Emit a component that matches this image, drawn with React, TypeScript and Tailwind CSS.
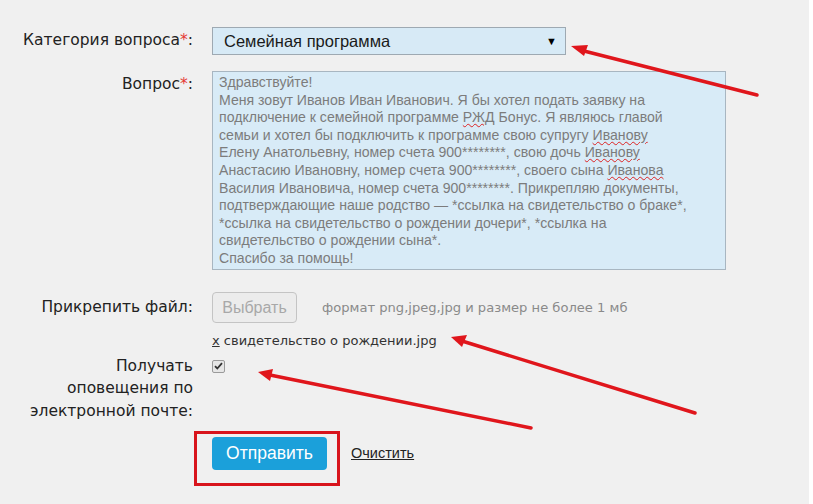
import React from "react";

const question = [
  [{ t: "Здравствуйте!" }],
  [{ t: "Меня зовут Иванов Иван Иванович. Я бы хотел подать заявку на" }],
  [{ t: "подключение к семейной программе " }, { t: "РЖД", w: true }, { t: " Бонус. Я являюсь главой" }],
  [{ t: "семьи и хотел бы подключить к программе свою супругу " }, { t: "Иванову", w: true }],
  [{ t: "Елену Анатольевну, номер счета 900********, свою дочь " }, { t: "Иванову", w: true }],
  [{ t: "Анастасию Ивановну, номер счета 900********, своего сына " }, { t: "Иванова", w: true }],
  [{ t: "Василия Ивановича, номер счета 900********. Прикрепляю документы," }],
  [{ t: "подтверждающие наше родство — *ссылка на свидетельство о браке*," }],
  [{ t: "*ссылка на свидетельство о рождении дочери*, *ссылка на" }],
  [{ t: "свидетельство о рождении сына*." }],
  [{ t: "Спасибо за помощь!" }],
];

const tahoma = { fontFamily: '"DejaVu Sans", Verdana, sans-serif' };

function Label({ children, className = "" }: any) {
  return (
    <div
      className={"w-[195px] shrink-0 text-right text-[15.5px] text-[#222] pr-[2px] " + className}
      style={tahoma}
    >
      {children}
    </div>
  );
}

function Star() {
  return <span className="text-[#e53935]">*</span>;
}

export default function App() {
  return (
    <div
      className="relative w-[813px] h-[504px] bg-[#f0f0f0] overflow-hidden"
      style={{ fontFamily: '"Liberation Sans", Arial, sans-serif' }}
    >
      <div className="absolute right-0 top-0 w-[4px] h-full bg-white" />

      <div className="flex flex-col pt-[27px]">
        {/* category */}
        <div className="flex items-center gap-[17px]">
          <Label>
            Категория вопроса<Star />:
          </Label>
          <div className="w-[354px] h-[28px] bg-[#d7eaf6] border border-[#9ea9b2] flex items-center justify-between pl-[11px] pr-[8px] text-[16.5px] text-[#1a1a1a]">
            <span>Семейная программа</span>
            <span className="text-[11px] text-black">▼</span>
          </div>
        </div>

        {/* question */}
        <div className="flex items-start gap-[17px] mt-[16px]">
          <Label className="pt-[2px]">
            Вопрос<Star />:
          </Label>
          <div className="w-[514px] h-[199px] bg-[#d8ebf7] border border-[#a8b6c1] pl-[6px] pt-[2px] text-[14.1px] leading-[17.6px] text-[#7c7c7c]">
            {question.map((line, i) => (
              <div key={i} className="whitespace-nowrap">
                {line.map((p: any, j) =>
                  p.w ? (
                    <span key={j} className="underline decoration-wavy decoration-[#d22] decoration-1 underline-offset-[1px]">
                      {p.t}
                    </span>
                  ) : (
                    <span key={j}>{p.t}</span>
                  )
                )}
              </div>
            ))}
          </div>
        </div>

        {/* file */}
        <div className="flex items-start gap-[17px] mt-[22px]">
          <Label className="pt-[4px]">Прикрепить файл:</Label>
          <div className="flex flex-col">
            <div className="flex items-center">
              <div className="w-[85px] h-[31px] rounded-[4px] border border-[#c4c4c4] bg-[#ececec] flex items-center justify-center text-[16px] text-[#a8a8a8]">
                Выбрать
              </div>
              <span className="ml-[25px] text-[13.1px] text-[#8a8a8a]" style={tahoma}>
                формат png,jpeg,jpg и размер не более 1 мб
              </span>
            </div>
            <div className="mt-[8px] text-[13px] text-[#333]" style={tahoma}>
              <span className="underline">x</span> свидетельство о рождении.jpg
            </div>
          </div>
        </div>

        {/* notify */}
        <div className="flex items-start gap-[17px] mt-[4px]">
          <Label className="leading-[22.5px]">
            Получать
            <br />
            оповещения по
            <br />
            электронной почте:
          </Label>
          <div className="mt-[5px] w-[13px] h-[13px] rounded-[2px] border border-[#9a9a9a] bg-[#e6e6e6] flex items-center justify-center">
            <svg width="9" height="8" viewBox="0 0 9 8">
              <path d="M1 4.2 L3.3 6.5 L8 1.2" stroke="#333" strokeWidth="1.8" fill="none" />
            </svg>
          </div>
        </div>

        {/* actions */}
        <div className="flex items-start mt-[9px] pl-[194px]">
          <div className="border-[3px] border-[#d8141c] pl-[15px] pt-[3px] w-[146px] h-[55px]">
            <button className="w-[115px] h-[33px] rounded-[4px] bg-[#1ba0da] text-white text-[17.5px]">
              Отправить
            </button>
          </div>
          <a className="ml-[11px] mt-[12px] text-[14.5px] text-[#222] underline">Очистить</a>
        </div>
      </div>

      {/* annotation arrows */}
      <svg className="absolute inset-0 pointer-events-none" width="813" height="504">
        <g stroke="#e0161c" strokeWidth="3.5" strokeLinecap="round">
          <line x1="757" y1="95" x2="584" y2="51" />
          <line x1="695" y1="413" x2="462" y2="341" />
          <line x1="531" y1="428" x2="270" y2="375" />
        </g>
        <g fill="#e0161c">
          <polygon points="571,46 588,45 584,56" />
          <polygon points="451,337 467,335 462,347" />
          <polygon points="258,372 273,369 270,381" />
        </g>
      </svg>
    </div>
  );
}
